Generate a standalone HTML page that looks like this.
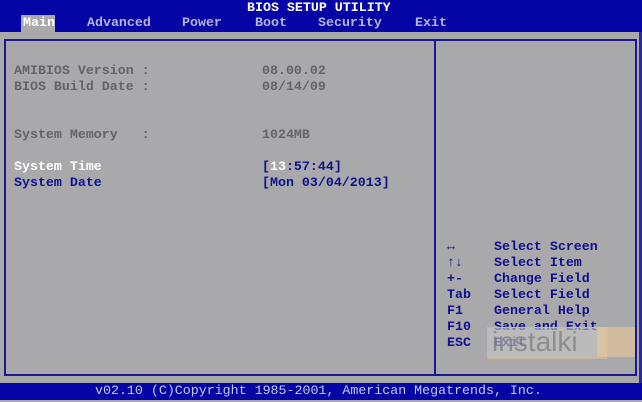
<!DOCTYPE html>
<html><head><style>
*{margin:0;padding:0}
body{width:642px;height:402px;background:#a9a9ab;position:relative;overflow:hidden;font-family:"Liberation Mono",monospace;font-size:13.3px;font-weight:bold;line-height:16px}
.a{position:absolute;white-space:pre}
.g{color:#646466}.w{color:#fff}.b{color:#10108f}
</style></head><body>
<div class="a" style="left:0;top:0;width:642px;height:32px;background:#0505a6"></div>
<div class="a w" style="left:247px;top:0">BIOS SETUP UTILITY</div>
<div class="a" style="left:21px;top:15px;width:34px;height:17px;background:#a9a9ab"></div>
<div class="a w" style="left:23px;top:15px">Main</div>
<div class="a" style="left:87px;top:15px;color:#b4b4dc">Advanced</div>
<div class="a" style="left:182px;top:15px;color:#b4b4dc">Power</div>
<div class="a" style="left:255px;top:15px;color:#b4b4dc">Boot</div>
<div class="a" style="left:318px;top:15px;color:#b4b4dc">Security</div>
<div class="a" style="left:415px;top:15px;color:#b4b4dc">Exit</div>
<div class="a" style="left:4px;top:39px;width:629px;height:333px;border:2px solid #1a1a90"></div>
<div class="a" style="left:434px;top:39px;width:2px;height:337px;background:#1a1a90"></div>
<div class="a" style="left:639px;top:32px;width:3px;height:352px;background:#2a2a9a"></div>
<div class="a g" style="left:14px;top:63px">AMIBIOS Version :
BIOS Build Date :</div>
<div class="a g" style="left:262px;top:63px">08.00.02
08/14/09</div>
<div class="a g" style="left:14px;top:127px">System Memory   :</div>
<div class="a g" style="left:262px;top:127px">1024MB</div>
<div class="a w" style="left:14px;top:159px">System Time</div>
<div class="a b" style="left:14px;top:175px">System Date</div>
<div class="a b" style="left:262px;top:159px">[<span class="w">13</span>:57:44]
[Mon 03/04/2013]</div>
<div class="a b" style="left:447px;top:239px">↔
↑↓
+-
Tab
F1
F10
ESC</div>
<div class="a b" style="left:494px;top:239px">Select Screen
Select Item
Change Field
Select Field
General Help
Save and Exit
Exit</div>
<div class="a" style="left:487px;top:327px;width:118px;height:30px;background:rgba(200,200,200,.6);border:1px solid #c8b8a0"></div>
<div class="a" style="left:492px;top:327px;font-family:'Liberation Sans',sans-serif;font-size:28px;line-height:30px;font-weight:normal;color:rgba(110,110,110,.6)">instalki</div>
<div class="a" style="left:597px;top:327px;width:38px;height:30px;background:rgba(235,200,150,.6)"></div>
<div class="a" style="left:0;top:383px;width:642px;height:17px;background:#0505a6"></div>
<div class="a" style="left:95px;top:383px;color:#c8c8e8;font-weight:normal">v02.10 (C)Copyright 1985-2001, American Megatrends, Inc.</div>
</body></html>
